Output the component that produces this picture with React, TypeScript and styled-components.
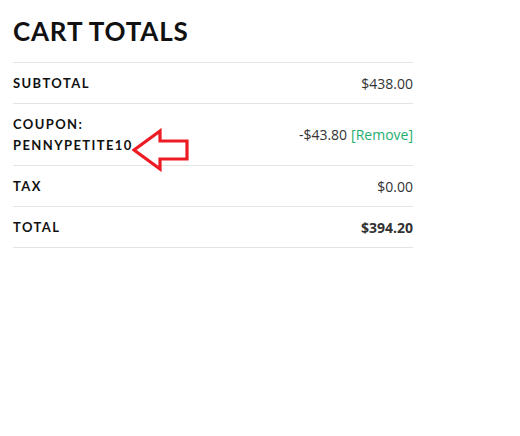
import React from 'react';
import styled, { createGlobalStyle } from 'styled-components';

const Global = createGlobalStyle`
	body {
		margin: 0;
		background: #fff;
		font-family: "Lato", "Liberation Sans", sans-serif;
	}
`;

const Wrap = styled.div`
	width: 400px;
	padding: 16px 0 0 13px;
`;

const Title = styled.h2`
	margin: 0 0 16px;
	font-size: 26px;
	font-weight: 700;
	letter-spacing: 0.8px;
	color: #111;
	line-height: 30px;
`;

const Table = styled.div`
	border-top: 1px solid #e4e4e4;
`;

const Row = styled.div<{ $tall?: boolean }>`
	display: flex;
	justify-content: space-between;
	align-items: center;
	height: ${p => (p.$tall ? 61 : 40)}px;
	border-bottom: 1px solid #e4e4e4;
`;

const Label = styled.div`
	position: relative;
	font-size: 13px;
	font-weight: 700;
	letter-spacing: 1.4px;
	line-height: 21px;
	color: #111;
	text-transform: uppercase;
`;

const Value = styled.div<{ $strong?: boolean }>`
	font-family: "Open Sans", "Liberation Sans", sans-serif;
	font-size: 14px;
	font-weight: ${p => (p.$strong ? 700 : 400)};
	color: #333;
`;

const Remove = styled.a`
	color: #1fae6e;
	text-decoration: none;
	margin-left: 4px;
`;

const Arrow = styled.svg`
	position: absolute;
	right: -57px;
	top: 14px;
`;

export default function App() {
	return (
		<>
			<Global />
			<Wrap>
				<Title>CART TOTALS</Title>
				<Table>
					<Row>
						<Label>Subtotal</Label>
						<Value>$438.00</Value>
					</Row>
					<Row $tall>
						<Label>
							Coupon:<br />PennyPetite10
							<Arrow width="58" height="44" viewBox="0 0 58 44">
								<path
									d="M2 22 L28 3 L28 13 L55 13 L55 31 L28 31 L28 41 Z"
									fill="none"
									stroke="#ed1c24"
									strokeWidth="3.2"
									strokeLinejoin="miter"
								/>
							</Arrow>
						</Label>
						<Value>
							-$43.80<Remove href="#">[Remove]</Remove>
						</Value>
					</Row>
					<Row>
						<Label>Tax</Label>
						<Value>$0.00</Value>
					</Row>
					<Row>
						<Label>Total</Label>
						<Value $strong>$394.20</Value>
					</Row>
				</Table>
			</Wrap>
		</>
	);
}
